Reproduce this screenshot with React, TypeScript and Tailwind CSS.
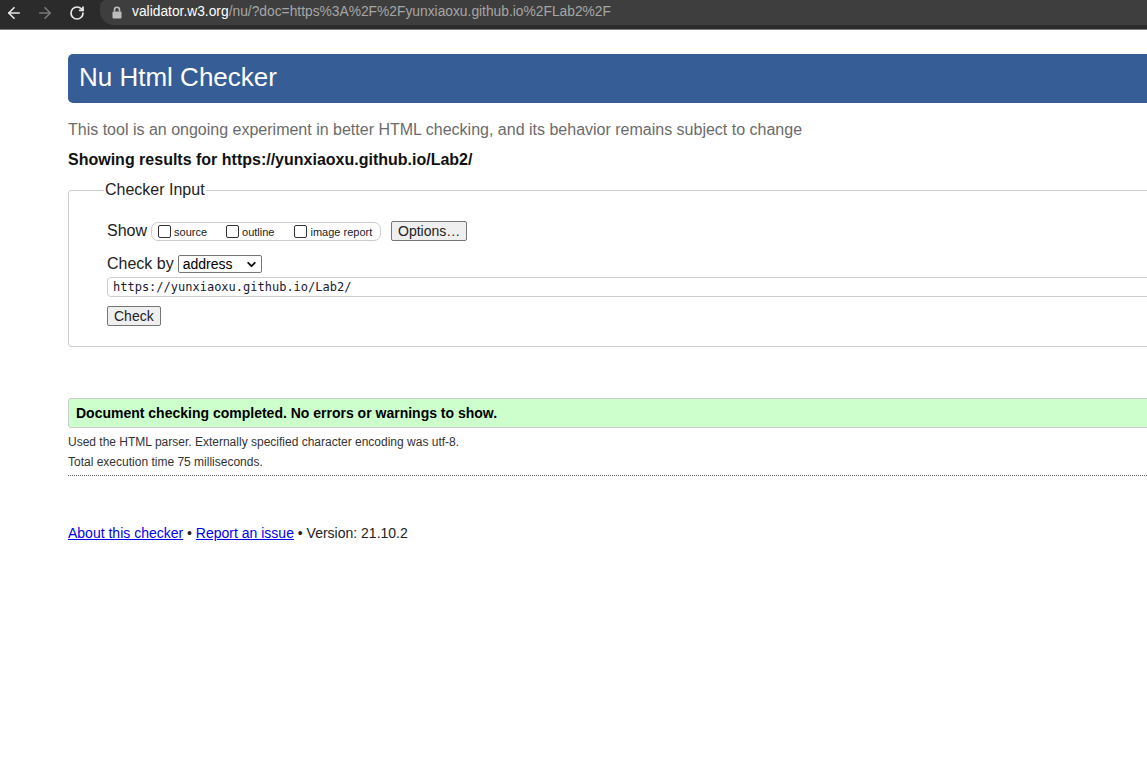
import { ArrowLeft, ArrowRight, RotateCw, ChevronDown } from "lucide-react";

const LockIcon = () => (
    <svg width="10" height="13" viewBox="0 0 10 13" fill="none">
        <path d="M2.5 5.5V3.8a2.5 2.5 0 0 1 5 0v1.7" stroke="#bdbdbd" strokeWidth="1.6" />
        <rect x="0.5" y="5.5" width="9" height="7" rx="1" fill="#bdbdbd" />
    </svg>
);

const BrowserBar = () => (
    <div className="h-[30px] bg-[#2b2b2b] flex flex-col">
        <div className="h-[25px] flex items-center">
            <div className="w-[100px] flex items-center shrink-0">
                <ArrowLeft className="ml-[5px]" size={18} strokeWidth={2.2} color="#e8e8e8" />
                <ArrowRight className="ml-[13px]" size={18} strokeWidth={2.2} color="#7a7a7a" />
                <RotateCw className="ml-[15px]" size={16} strokeWidth={2.6} color="#e8e8e8" />
            </div>
            <div className="h-[25px] flex-1 bg-[#3e3e3e] rounded-bl-[14px] rounded-tl-[6px] flex items-center pl-[12px] font-['Liberation_Sans',Arial,sans-serif] text-[13.8px]">
                <LockIcon />
                <span className="ml-[10px] text-white">validator.w3.org</span>
                <span className="text-[#a6a6a6]">/nu/?doc=https%3A%2F%2Fyunxiaoxu.github.io%2FLab2%2F</span>
            </div>
        </div>
        <div className="flex-1" />
        <div className="h-[1px] bg-[#7d7d7d]" />
    </div>
);

const SmallCheck = ({ label }: { label: string }) => (
    <label className="flex items-center">
        <span className="w-[13px] h-[13px] border border-[#333] rounded-[2px] bg-white" />
        <span className="ml-[3px] text-[11px] leading-none mt-[3px]">{label}</span>
    </label>
);

export default function App() {
    return (
        <div className="min-h-screen bg-white overflow-hidden font-['Liberation_Sans',Arial,sans-serif] text-[#222]">
            <BrowserBar />
            <div className="pl-[68px] mr-[-40px]">
                {/* Заголовок */}
                <h1 className="mt-[24px] h-[49px] rounded-[5px] bg-[#365d95] text-white text-[26px] flex items-center pl-[11px] pb-[2px]">
                    Nu Html Checker
                </h1>
                <p className="mt-[18px] h-[18px] leading-[18px] text-[16px] text-[#6b6b6b]">
                    This tool is an ongoing experiment in better HTML checking, and its behavior remains subject to change
                </p>
                <p className="mt-[12px] h-[18px] leading-[18px] text-[16px] font-bold text-[#111]">
                    Showing results for https://yunxiaoxu.github.io/Lab2/
                </p>

                {/* Checker Input */}
                <fieldset className="mt-[12px] border border-[#ccc] rounded-[3px] pl-[38px] pb-[20px]">
                    <legend className="ml-[-3px] px-[1px] text-[16px] leading-[18px] text-[#222]">Checker Input</legend>
                    <div className="mt-[22px] h-[20px] flex items-center">
                        <span className="text-[16px] leading-none">Show</span>
                        <div className="ml-[4px] h-[19px] w-[230px] border border-[#ccc] rounded-[7px] flex items-center pl-[6px]">
                            <SmallCheck label="source" />
                            <div className="w-[19px]" />
                            <SmallCheck label="outline" />
                            <div className="w-[20px]" />
                            <SmallCheck label="image report" />
                        </div>
                        <button className="ml-[10px] h-[20px] px-[6px] bg-[#efefef] border border-[#767676] rounded-[2px] text-[14px] leading-none">
                            Options…
                        </button>
                    </div>
                    <div className="mt-[14px] h-[18px] flex items-center">
                        <span className="text-[16px] leading-none">Check by</span>
                        <div className="ml-[4px] w-[84px] h-[18px] border border-[#767676] rounded-[2px] bg-white flex items-center justify-between pl-[4px] pr-[3px] text-[14px] text-black">
                            <span className="leading-none">address</span>
                            <ChevronDown size={13} strokeWidth={3.5} color="#111" />
                        </div>
                    </div>
                    <div className="mt-[4px] h-[20px] border border-[#ccc] rounded-[4px] flex items-center pl-[5px] font-['DejaVu_Sans_Mono',monospace] text-[12px] text-[#1a1a2e]">
                        https://yunxiaoxu.github.io/Lab2/
                    </div>
                    <button className="mt-[9px] h-[20px] px-[6px] bg-[#efefef] border border-[#767676] rounded-[2px] text-[14px] leading-none block">
                        Check
                    </button>
                </fieldset>

                {/* Результат */}
                <div className="mt-[51px] h-[30px] bg-[#ccffcc] border border-[#cccccc] rounded-[3px] flex items-center pl-[7px] text-[14px] font-bold text-black">
                    Document checking completed. No errors or warnings to show.
                </div>
                <p className="mt-[4px] text-[12px] leading-[20px] text-[#333]">
                    Used the HTML parser. Externally specified character encoding was utf-8.
                </p>
                <p className="text-[12px] leading-[20px] text-[#333]">Total execution time 75 milliseconds.</p>
                <div className="mt-[3px] border-t border-dotted border-[#666]" />

                {/* Футер */}
                <p className="mt-[49px] text-[14px] leading-[16px] text-[#222]">
                    <a href="#" className="text-[#0000ee] underline">About this checker</a>
                    {" • "}
                    <a href="#" className="text-[#0000ee] underline">Report an issue</a>
                    {" • Version: 21.10.2"}
                </p>
            </div>
        </div>
    );
}
